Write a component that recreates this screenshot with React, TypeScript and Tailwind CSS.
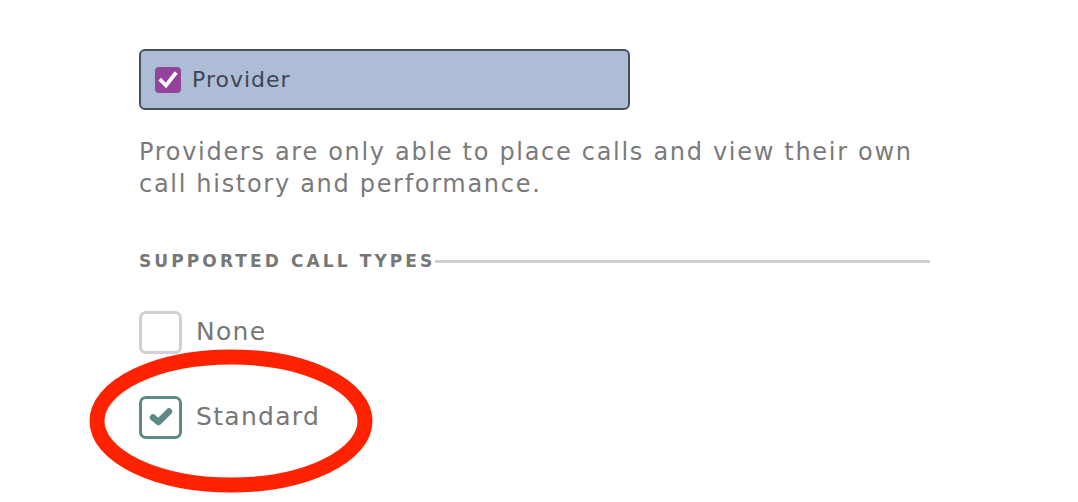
import React from "react";

export default function App() {
  return (
    <div className="relative w-[1078px] h-[502px] bg-white overflow-hidden" style={{ fontFamily: '"DejaVu Sans", "Noto Sans", sans-serif' }}>
      <div className="pl-[139px] pt-[49px] w-[930px]">
        <div className="w-[491px] h-[61px] rounded-[6px] border-2 border-[#474f5e] bg-[#adbdd6] flex items-center pl-[14px] gap-[11px]">
          <div className="w-[26px] h-[26px] rounded-[4px] bg-[#94439a] flex items-center justify-center">
            <svg width="22" height="22" viewBox="0 0 22 22">
              <path d="M4 11.5 L9 16.5 L18 5" fill="none" stroke="white" strokeWidth="3.8" strokeLinecap="square" />
            </svg>
          </div>
          <span className="text-[22px] tracking-[1px] text-[#3f4554]">Provider</span>
        </div>
        <p className="mt-[26px] text-[24px] leading-[32px] tracking-[1.7px] text-[#7a7a7a] w-[790px]">
          Providers are only able to place calls and view their own call history and performance.
        </p>
        <div className="mt-[49px] flex items-center">
          <span className="text-[17px] font-bold tracking-[3.1px] text-[#777]">SUPPORTED CALL TYPES</span>
          <div className="flex-1 h-[3px] bg-[#d0d0d0]" />
        </div>
        <div className="mt-[36px] flex items-center gap-[14px]">
          <div className="w-[43px] h-[43px] rounded-[7px] border-[3px] border-[#d0d0d0]" />
          <span className="text-[25px] tracking-[1.3px] text-[#777]">None</span>
        </div>
        <div className="mt-[42px] flex items-center gap-[14px]">
          <div className="w-[43px] h-[43px] rounded-[7px] border-[3px] border-[#5e8a86] flex items-center justify-center">
            <svg width="32" height="32" viewBox="0 0 32 32">
              <path d="M8 16.5 L13.5 21 L24 10.5" fill="none" stroke="#5e8a86" strokeWidth="6.5" strokeLinecap="round" strokeLinejoin="round" />
            </svg>
          </div>
          <span className="text-[25px] tracking-[1.3px] text-[#777]">Standard</span>
        </div>
      </div>
      <svg className="absolute left-0 top-0 pointer-events-none" width="1078" height="502">
        <ellipse cx="231" cy="421" rx="134" ry="64" fill="none" stroke="#ff2200" strokeWidth="15" />
      </svg>
    </div>
  );
}
